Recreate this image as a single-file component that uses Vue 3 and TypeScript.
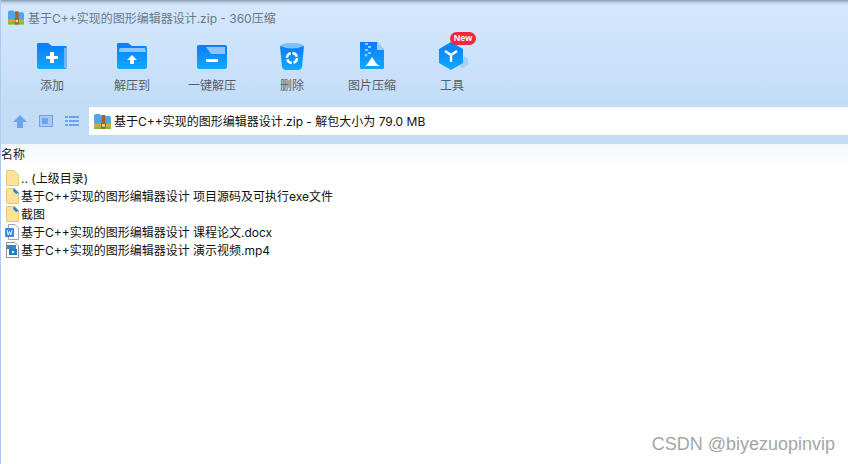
<script setup lang="ts">
// 360压缩 main window
interface Tool { label: string; icon: string }
interface Row { name: string; icon: string }

const tools: Tool[] = [
  { label: '添加', icon: 'add' },
  { label: '解压到', icon: 'extract' },
  { label: '一键解压', icon: 'one' },
  { label: '删除', icon: 'del' },
  { label: '图片压缩', icon: 'img' },
  { label: '工具', icon: 'tool' }
]

const rows: Row[] = [
  { name: '.. (上级目录)', icon: 'up' },
  { name: '基于C++实现的图形编辑器设计 项目源码及可执行exe文件', icon: 'folder' },
  { name: '截图', icon: 'folder' },
  { name: '基于C++实现的图形编辑器设计 课程论文.docx', icon: 'doc' },
  { name: '基于C++实现的图形编辑器设计 演示视频.mp4', icon: 'video' }
]
</script>

<template>
  <div class="window">
    <div class="head">
      <div class="title">
        <svg width="16" height="15" viewBox="0 0 18 16">
          <path d="M0 2 Q0 0 2 0 H6 L8 2 H16 Q18 2 18 4 V11 H0Z" fill="#4ea6ec" />
          <rect y="10" width="18" height="3" fill="#f39a1f" />
          <rect y="13" width="18" height="3" fill="#7ebc3c" />
          <rect x="8" y="1" width="4" height="15" fill="#a8652a" />
          <rect x="8" y="10" width="4" height="4" fill="#f6d488" stroke="#7b4a1c" stroke-width=".7" />
        </svg>
        <span>基于C++实现的图形编辑器设计.zip - 360压缩</span>
      </div>

      <div class="tools">
        <div v-for="t in tools" :key="t.label" class="tool">
          <div class="tool-icon">
            <svg width="36" height="30" viewBox="0 0 36 30">
              <defs>
                <linearGradient id="blue" x1="0" y1="0" x2="0" y2="1">
                  <stop offset="0" stop-color="#0a7cff" />
                  <stop offset="1" stop-color="#0fa9fb" />
                </linearGradient>
              </defs>
              <template v-if="t.icon === 'add'">
                <path d="M3 2 Q3 1 4 1 H14 L18 4 H31 Q33 4 33 6 V25 Q33 27 31 27 H5 Q3 27 3 25Z" fill="url(#blue)" />
                <rect x="30" y="6" width="3" height="20" fill="#6fb6ff" />
                <path d="M16 10 h4 v4 h4 v3 h-4 v4 h-4 v-4 h-4 v-3 h4z" fill="#fff" />
              </template>
              <template v-else-if="t.icon === 'extract'">
                <path d="M3 2 Q3 1 4 1 H14 L18 4 H31 Q33 4 33 6 V25 Q33 27 31 27 H5 Q3 27 3 25Z" fill="url(#blue)" />
                <path d="M5 8 Q5 6 7 6 H31 L32 10 H5Z" fill="#8cc6ff" />
                <path d="M18 13 l5 5 h-3 v4 h-4 v-4 h-3z" fill="#fff" />
              </template>
              <template v-else-if="t.icon === 'one'">
                <path d="M3 5 Q3 3 5 3 H31 Q33 3 33 5 V25 Q33 27 31 27 H5 Q3 27 3 25Z" fill="url(#blue)" />
                <path d="M12 5 H31 V12 H17Z" fill="#8cc6ff" />
                <rect x="12" y="17" width="12" height="3" rx="1" fill="#fff" />
              </template>
              <template v-else-if="t.icon === 'del'">
                <ellipse cx="18" cy="4" rx="12" ry="3" fill="#7cc0fb" />
                <path d="M6 4 Q18 9 30 4 L28 25 Q27 28 24 28 H12 Q9 28 8 25Z" fill="url(#blue)" />
                <circle cx="18" cy="16" r="5" fill="none" stroke="#fff" stroke-width="2.4" stroke-dasharray="6 1.8" />
              </template>
              <template v-else-if="t.icon === 'img'">
                <path d="M6 0 H23 L30 8 V26 Q30 27 29 27 H7 Q6 27 6 26Z" fill="url(#blue)" />
                <path d="M23 0 L30 8 H23Z" fill="#9ccdfb" />
                <rect x="11" y="1" width="3" height="2" fill="#8cc6ff" /><rect x="14" y="4" width="3" height="2" fill="#8cc6ff" />
                <rect x="11" y="7" width="3" height="2" fill="#8cc6ff" /><rect x="14" y="10" width="3" height="2" fill="#8cc6ff" />
                <circle cx="12" cy="13" r="1.5" fill="#8cc6ff" />
                <path d="M11 24 Q13 23 14 21 L18 15 L22 21 Q23 23 26 24Z" fill="#fff" />
              </template>
              <template v-else>
                <path d="M29 14 l5 2 v7 l-5 3 l-4 -2 v-8z" fill="#a5d0f8" />
                <path d="M17 0 L29 7 V21 L17 28 L5 21 V7Z" fill="url(#blue)" />
                <path d="M11 9 L17 13 L23 9 M17 13 V20" fill="none" stroke="#fff" stroke-width="2.4" />
              </template>
            </svg>
            <span v-if="t.icon === 'tool'" class="badge">New</span>
          </div>
          <div class="tool-label">{{ t.label }}</div>
        </div>
      </div>

      <div class="nav">
        <div class="nav-btns">
          <svg width="14" height="13" viewBox="0 0 14 13"><path d="M7 0 L14 7 H10 V13 H4 V7 H0Z" fill="#6ea3e9" /></svg>
          <svg width="14" height="12" viewBox="0 0 14 12">
            <rect x=".5" y=".5" width="13" height="11" fill="#a9c9f2" stroke="#6ea3e9" />
            <rect x="3" y="3" width="6" height="6" fill="#6ea3e9" />
          </svg>
          <svg width="14" height="12" viewBox="0 0 14 12" fill="#6ea3e9">
            <rect y="1" width="3" height="2" /><rect x="4" y="1" width="10" height="2" />
            <rect y="5" width="3" height="2" /><rect x="4" y="5" width="10" height="2" />
            <rect y="9" width="3" height="2" /><rect x="4" y="9" width="10" height="2" />
          </svg>
        </div>
        <div class="address">
          <svg width="17" height="15" viewBox="0 0 18 16">
            <path d="M0 2 Q0 0 2 0 H6 L8 2 H16 Q18 2 18 4 V11 H0Z" fill="#4ea6ec" />
            <rect y="10" width="18" height="3" fill="#f39a1f" />
            <rect y="13" width="18" height="3" fill="#7ebc3c" />
            <rect x="8" y="1" width="4" height="15" fill="#a8652a" />
            <rect x="8" y="10" width="4" height="4" fill="#f6d488" stroke="#7b4a1c" stroke-width=".7" />
          </svg>
          <span>基于C++实现的图形编辑器设计.zip - 解包大小为 79.0 MB</span>
        </div>
      </div>
    </div>

    <div class="list">
      <div class="list-head">名称</div>
      <div class="rows">
        <div v-for="r in rows" :key="r.name" class="row">
          <svg width="14" height="16" viewBox="0 0 14 16">
            <template v-if="r.icon === 'up' || r.icon === 'folder'">
              <path d="M1.5 .5 H9 L13.5 5 V15.5 H1.5Z" fill="#fde29a" stroke="#e4c67e" />
              <path v-if="r.icon === 'folder'" d="M9 0 L14 5 L11 6 L8 3Z" fill="#2f86d8" />
            </template>
            <template v-else-if="r.icon === 'doc'">
              <path d="M3.5 .5 H10 L13.5 4 V15.5 H3.5Z" fill="#fff" stroke="#9aa7b8" />
              <rect x="0" y="4" width="9" height="9" rx="1" fill="#3f86e0" />
              <path d="M2 6 L3.2 11 L4.5 7.5 L5.8 11 L7 6" fill="none" stroke="#fff" stroke-width=".9" />
            </template>
            <template v-else>
              <path d="M1.5 .5 H10 L13.5 4 V15.5 H1.5Z" fill="#fff" stroke="#8b8f96" />
              <rect x="2" y="3" width="9" height="4" fill="#2f86d8" />
              <rect x="4" y="7" width="8" height="6" fill="#1d79cc" />
              <path d="M7 8.5 L10 10 L7 11.5Z" fill="#fff" />
            </template>
          </svg>
          <span>{{ r.name }}</span>
        </div>
      </div>
    </div>

    <div class="mark">CSDN @biyezuopinvip</div>
  </div>
</template>

<style scoped>
.window {
  position: relative;
  width: 848px;
  height: 464px;
  overflow: hidden;
  background: #fff;
  border-left: 1px solid #a9cdf3;
  box-sizing: border-box;
  font-family: Inter, "Noto Sans CJK SC", sans-serif;
  font-size: 12px;
}
.head {
  margin-left: -1px;
  height: 144px;
  display: flex;
  flex-direction: column;
  background: linear-gradient(#8a9bae 0, #c5d9ec 3px, #d3e8fe 6px, #c3dcf6 106px, #c3dcf6 144px);
}
.title {
  height: 34px;
  padding-left: 8px;
  box-sizing: border-box;
  display: flex;
  align-items: center;
  gap: 4px;
  color: #6b7785;
}
.tools {
  height: 72px;
  padding-left: 12px;
  display: flex;
  box-sizing: border-box;
}
.tool {
  width: 80px;
  display: flex;
  flex-direction: column;
  align-items: center;
}
.tool-icon {
  position: relative;
  height: 43px;
  padding-top: 8px;
  box-sizing: border-box;
}
.badge {
  position: absolute;
  left: 16px;
  top: -2px;
  width: 26px;
  height: 13px;
  border-radius: 7px;
  background: #f3263a;
  color: #fff;
  font: bold 9px/13px "Liberation Sans", sans-serif;
  text-align: center;
}
.tool-label {
  color: #555f6b;
  line-height: 18px;
}
.nav {
  display: flex;
  height: 28px;
  margin-top: 1px;
}
.nav-btns {
  width: 89px;
  padding-left: 13px;
  box-sizing: border-box;
  display: flex;
  align-items: center;
  gap: 12px;
}
.address {
  flex: 1;
  background: #fff;
  display: flex;
  align-items: center;
  gap: 3px;
  padding-left: 5px;
  color: #111;
}
.address span {
  margin-top: -1px;
}
.list-head {
  height: 22px;
  padding-left: 1px;
  line-height: 22px;
  margin-left: -1px;
  color: #222;
  background: linear-gradient(#f2f8fe, #fff);
}
.rows {
  padding: 3px 0 0 4px;
}
.row {
  height: 18px;
  display: flex;
  align-items: center;
  gap: 2px;
  color: #111;
  white-space: nowrap;
}
.row span {
  margin-top: -2px;
}
.mark {
  position: absolute;
  right: 13px;
  bottom: 9px;
  color: #a5a5a5;
  font: 18px "Liberation Sans", sans-serif;
}
</style>
